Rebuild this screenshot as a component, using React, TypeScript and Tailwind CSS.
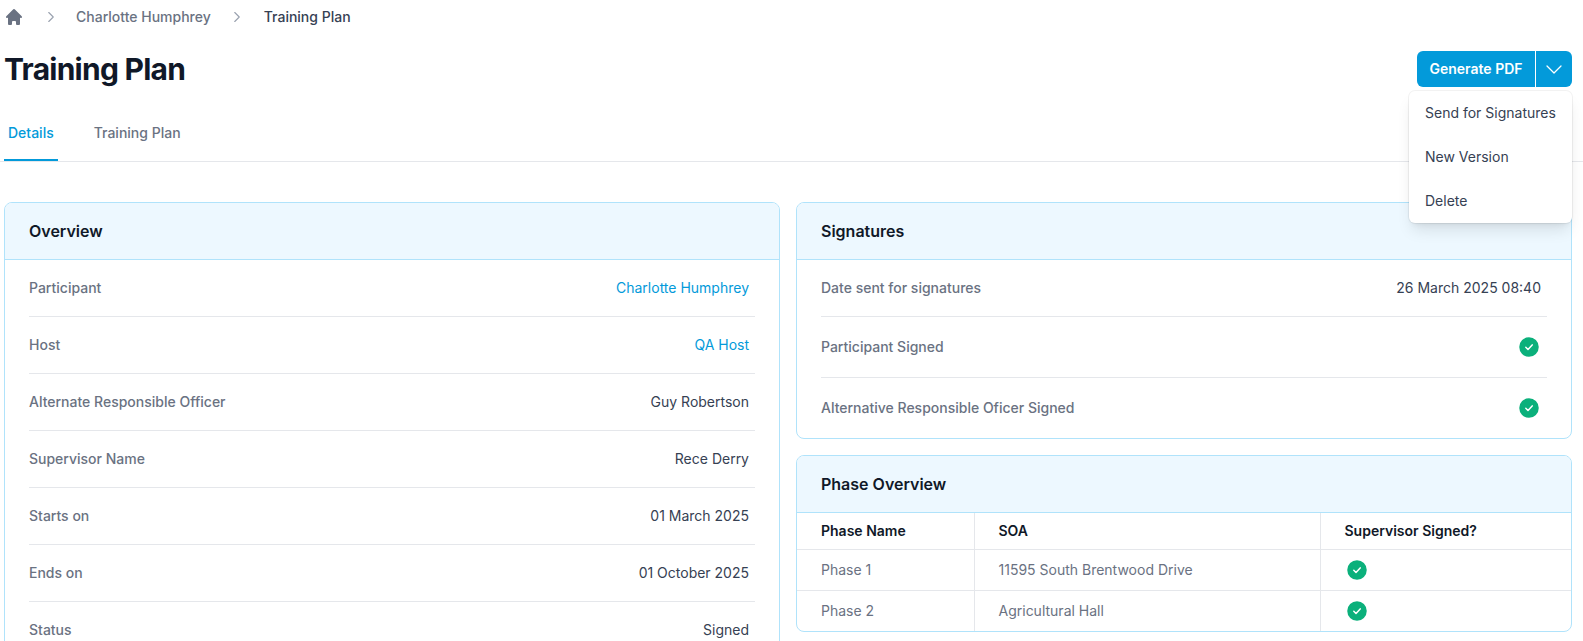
import React from 'react';
import { ChevronRight } from 'lucide-react';

const overviewRows: { label: string; value: string; link?: boolean }[] = [
  { label: 'Participant', value: 'Charlotte Humphrey', link: true },
  { label: 'Host', value: 'QA Host', link: true },
  { label: 'Alternate Responsible Officer', value: 'Guy Robertson' },
  { label: 'Supervisor Name', value: 'Rece Derry' },
  { label: 'Starts on', value: '01 March 2025' },
  { label: 'Ends on', value: '01 October 2025' },
  { label: 'Status', value: 'Signed' },
];

const phases = [
  { name: 'Phase 1', soa: '11595 South Brentwood Drive' },
  { name: 'Phase 2', soa: 'Agricultural Hall' },
];

const HomeIcon = () => (
  <svg className="h-5 w-5 text-gray-500" viewBox="0 0 20 20" fill="currentColor">
    <path d="M10.707 2.293a1 1 0 00-1.414 0l-7 7a1 1 0 001.414 1.414L4 10.414V17a1 1 0 001 1h2a1 1 0 001-1v-2a1 1 0 011-1h2a1 1 0 011 1v2a1 1 0 001 1h2a1 1 0 001-1v-6.586l.293.293a1 1 0 001.414-1.414l-7-7z" />
  </svg>
);

const SignedIcon = () => (
  <svg className="h-5 w-5 shrink-0" viewBox="0 0 20 20">
    <circle cx="10" cy="10" r="9.75" fill="#0bb07b" />
    <path d="M6.8 10.3l2.2 2.2 4.2-4.6" fill="none" stroke="#fff" strokeWidth="1.5" strokeLinecap="round" strokeLinejoin="round" />
  </svg>
);

const Card: React.FC<{ title: string; children: React.ReactNode }> = ({ title, children }) => (
  <div className="overflow-hidden rounded-lg border border-[#b0e3fb] bg-white">
    <div className="flex h-[57px] items-center border-b border-[#b0e3fb] bg-[#edf8ff] px-6">
      <h2 className="text-base font-semibold text-gray-900">{title}</h2>
    </div>
    {children}
  </div>
);

export default function App() {
  return (
    <div className="relative h-[641px] overflow-hidden bg-white font-['Inter',sans-serif] text-sm">
      <nav className="flex h-[34px] items-center pl-1 text-gray-500">
        <HomeIcon />
        <ChevronRight className="ml-[18px] h-[18px] w-[18px] text-gray-400" strokeWidth={1.5} />
        <span className="ml-4 font-medium">Charlotte Humphrey</span>
        <ChevronRight className="ml-[17px] h-[18px] w-[18px] text-gray-400" strokeWidth={1.5} />
        <span className="ml-[18px] font-medium text-gray-700">Training Plan</span>
      </nav>

      <div className="flex h-[53px] items-center justify-between pl-1 pr-[11px] pt-[17px]">
        <h1 className="text-3xl font-bold tracking-tight text-gray-900">Training Plan</h1>
        <div className="flex h-9 overflow-hidden rounded-md bg-[#039ada] text-white">
          <button className="w-[119px] border-r border-white font-semibold">Generate PDF</button>
          <button className="flex w-9 items-center justify-center">
            <svg className="h-6 w-6" viewBox="0 0 24 24" fill="none" stroke="currentColor" strokeWidth="1.25" strokeLinecap="round" strokeLinejoin="round">
              <path d="M19 9l-7 7-7-7" />
            </svg>
          </button>
        </div>
      </div>

      <div className="absolute right-[11px] top-[91px] z-10 flex w-[163px] flex-col rounded-md bg-white text-gray-700 shadow-lg ring-1 ring-black/5">
        <a className="flex h-11 items-center whitespace-nowrap px-4">Send for Signatures</a>
        <a className="flex h-11 items-center px-4">New Version</a>
        <a className="flex h-11 items-center px-4">Delete</a>
      </div>

      <div className="mt-[27px] flex h-[48px] gap-8 border-b border-gray-200 pl-1">
        <button className="h-[47px] border-b-2 border-[#039ada] px-1 pb-[7px] font-medium text-[#039ada]">Details</button>
        <button className="h-[47px] px-1 pb-[9px] font-medium text-gray-500">Training Plan</button>
      </div>

      <main className="grid grid-cols-2 items-start gap-4 pl-1 pr-[11px] pt-10">
        <Card title="Overview">
          <div className="px-6">
            {overviewRows.map((row) => (
              <div key={row.label} className="flex h-[57px] items-center justify-between border-b border-gray-200 pr-1.5">
                <span className="font-medium text-gray-500">{row.label}</span>
                <span className={row.link ? 'text-[#039ada]' : 'text-gray-700'}>{row.value}</span>
              </div>
            ))}
          </div>
        </Card>

        <div className="flex flex-col gap-4">
          <Card title="Signatures">
            <div className="px-6">
              <div className="flex h-[57px] items-center justify-between border-b border-gray-200 pr-1.5">
                <span className="font-medium text-gray-500">Date sent for signatures</span>
                <span className="text-gray-700">26 March 2025 08:40</span>
              </div>
              <div className="flex h-[61px] items-center justify-between border-b border-gray-200 pr-2">
                <span className="font-medium text-gray-500">Participant Signed</span>
                <SignedIcon />
              </div>
              <div className="flex h-[60px] items-center justify-between pr-2">
                <span className="font-medium text-gray-500">Alternative Responsible Oficer Signed</span>
                <SignedIcon />
              </div>
            </div>
          </Card>

          <Card title="Phase Overview">
            <table className="w-full table-fixed border-collapse">
              <thead>
                <tr className="h-[36px] border-b border-gray-200 text-left text-gray-900">
                  <th className="w-[177px] border-r border-gray-200 pl-6 font-semibold">Phase Name</th>
                  <th className="w-[346px] border-r border-gray-200 pl-6 font-semibold">SOA</th>
                  <th className="pl-6 font-semibold">Supervisor Signed?</th>
                </tr>
              </thead>
              <tbody className="text-gray-500">
                {phases.map((phase, i) => (
                  <tr key={phase.name} className={i === 0 ? 'h-[41px] border-b border-gray-200' : 'h-[41px]'}>
                    <td className="border-r border-gray-200 pl-6">{phase.name}</td>
                    <td className="border-r border-gray-200 pl-6">{phase.soa}</td>
                    <td className="pl-[26px]"><SignedIcon /></td>
                  </tr>
                ))}
              </tbody>
            </table>
          </Card>
        </div>
      </main>
    </div>
  );
}
